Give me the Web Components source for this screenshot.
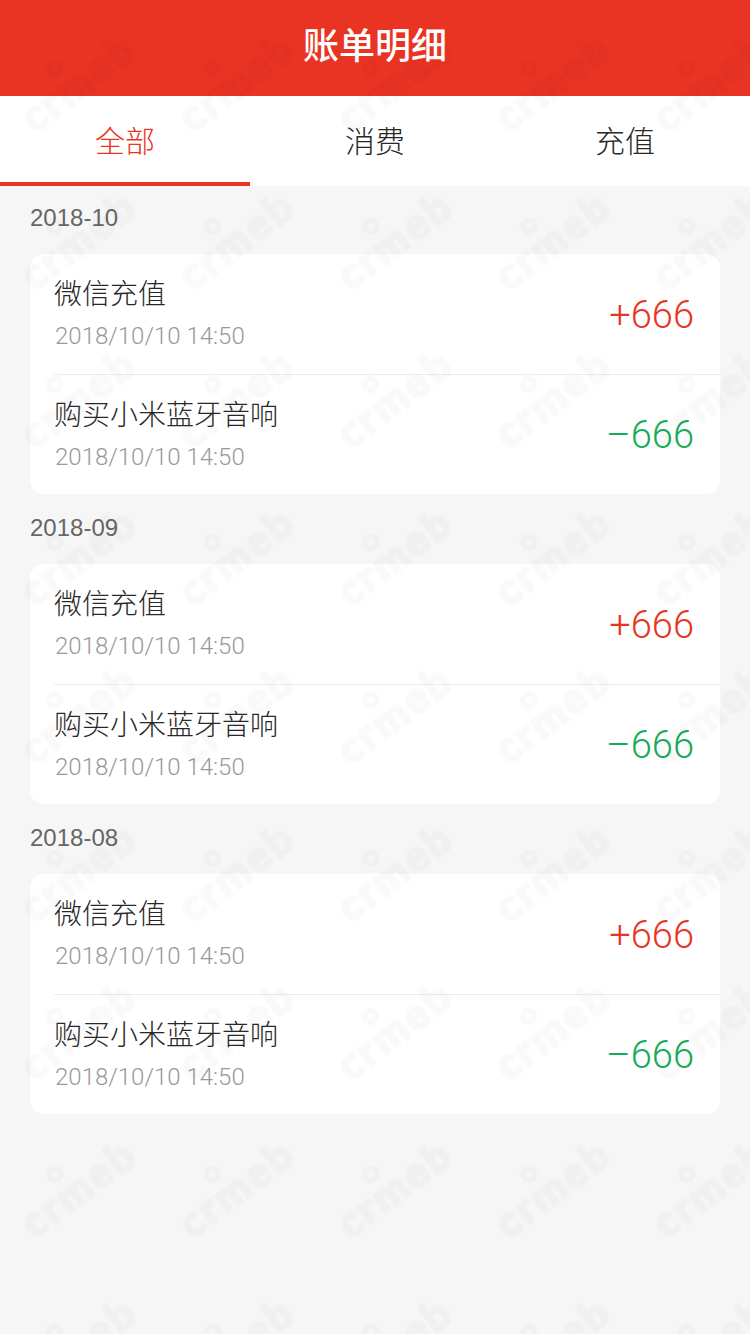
<!DOCTYPE html>
<html lang="zh">
<head>
<meta charset="utf-8">
<title>账单明细</title>
<style>
  html, body { margin: 0; padding: 0; }
  body {
    width: 750px;
    min-height: 1334px;
    background: #f6f6f6;
    font-family: "Liberation Sans", "Noto Sans CJK SC", sans-serif;
  }
</style>
</head>
<body>
<bill-header>账单明细</bill-header>
<bill-tabs>
  <bill-tab active>全部</bill-tab>
  <bill-tab>消费</bill-tab>
  <bill-tab>充值</bill-tab>
</bill-tabs>
<bill-list>
  <bill-month label="2018-10">
    <bill-row title="微信充值" time="2018/10/10 14:50" amount="+666" kind="in"></bill-row>
    <bill-row title="购买小米蓝牙音响" time="2018/10/10 14:50" amount="–666" kind="out"></bill-row>
  </bill-month>
  <bill-month label="2018-09">
    <bill-row title="微信充值" time="2018/10/10 14:50" amount="+666" kind="in"></bill-row>
    <bill-row title="购买小米蓝牙音响" time="2018/10/10 14:50" amount="–666" kind="out"></bill-row>
  </bill-month>
  <bill-month label="2018-08">
    <bill-row title="微信充值" time="2018/10/10 14:50" amount="+666" kind="in"></bill-row>
    <bill-row title="购买小米蓝牙音响" time="2018/10/10 14:50" amount="–666" kind="out"></bill-row>
  </bill-month>
</bill-list>
<bill-watermark></bill-watermark>

<script>
const CJK = `"Noto Sans CJK SC", sans-serif`;
const LATIN = `Roboto, "Noto Sans CJK SC", sans-serif`;

class BillHeader extends HTMLElement {
  constructor() {
    super();
    this.attachShadow({ mode: "open" }).innerHTML = `
      <style>
        :host {
          display: flex;
          box-sizing: border-box;
          height: 96px;
          padding-bottom: 10px;
          align-items: center;
          justify-content: center;
          background: #e93323;
          color: #fff;
          font: 500 36px/1 ${CJK};
        }
      </style>
      <slot></slot>`;
  }
}

class BillTabs extends HTMLElement {
  constructor() {
    super();
    this.attachShadow({ mode: "open" }).innerHTML = `
      <style>
        :host { display: grid; grid-template-columns: repeat(3, 250px); height: 90px; background: #fff; }
      </style>
      <slot></slot>`;
  }
}

class BillTab extends HTMLElement {
  constructor() {
    super();
    this.attachShadow({ mode: "open" }).innerHTML = `
      <style>
        :host {
          display: flex;
          align-items: center;
          justify-content: center;
          box-sizing: border-box;
          padding-bottom: 4px;
          color: #282828;
          font: 300 30px/1 ${CJK};
        }
        :host([active]) {
          color: #e93323;
          border-bottom: 4px solid #e93323;
          padding-bottom: 0;
        }
      </style>
      <slot></slot>`;
  }
}

class BillList extends HTMLElement {
  constructor() {
    super();
    this.attachShadow({ mode: "open" }).innerHTML = `
      <style>
        :host { display: flex; flex-direction: column; gap: 2px; padding: 0 30px; }
      </style>
      <slot></slot>`;
  }
}

class BillMonth extends HTMLElement {
  constructor() {
    super();
    this.attachShadow({ mode: "open" }).innerHTML = `
      <style>
        :host { display: block; }
        .label {
          display: flex;
          align-items: center;
          box-sizing: border-box;
          height: 68px;
          padding-bottom: 4px;
          color: #666;
          font: 24px/1 "Liberation Sans", sans-serif;
        }
        .card { background: #fff; border-radius: 14px; overflow: hidden; }
      </style>
      <div class="label"></div>
      <div class="card"><slot></slot></div>`;
  }
  connectedCallback() {
    this.shadowRoot.querySelector(".label").textContent = this.getAttribute("label");
  }
}

class BillRow extends HTMLElement {
  constructor() {
    super();
    this.attachShadow({ mode: "open" }).innerHTML = `
      <style>
        :host { display: block; height: 119px; margin-left: 24px; box-sizing: border-box; }
        :host(:not(:last-child)) { height: 121px; border-bottom: 1px solid #eee; }
        .row { display: flex; height: 100%; align-items: center; justify-content: space-between; padding-right: 26px; box-sizing: border-box; }
        .info { display: flex; flex-direction: column; gap: 14px; }
        .title { color: #282828; font: 300 28px/30px ${CJK}; }
        .time { margin-left: 1px; color: #999; font: 300 24px/30px ${LATIN}; }
        .amount { padding-top: 2px; font: 300 38px/1 ${LATIN}; }
        :host(:last-child) .amount { padding-top: 0; }
        :host([kind="in"]) .amount { color: #e93323; }
        :host([kind="out"]) .amount { color: #16ac57; }
      </style>
      <div class="row">
        <div class="info">
          <div class="title"></div>
          <div class="time"></div>
        </div>
        <div class="amount"></div>
      </div>`;
  }
  connectedCallback() {
    for (const key of ["title", "time", "amount"]) {
      this.shadowRoot.querySelector("." + key).textContent = this.getAttribute(key);
    }
  }
}

// faint "crmeb" tile that lies over the whole page
class BillWatermark extends HTMLElement {
  constructor() {
    super();
    this.attachShadow({ mode: "open" }).innerHTML = `
      <style>
        :host { position: absolute; inset: 0; height: 1334px; pointer-events: none; }
        svg { display: block; }
      </style>
      <svg width="750" height="1334" aria-hidden="true">
        <defs>
          <pattern id="tile" x="0" y="5" width="158" height="158" patternUnits="userSpaceOnUse">
            <g transform="rotate(-37 79 79)" fill="#000" stroke="#000" opacity=".024">
              <text x="80" y="92" text-anchor="middle" font-family="Lato" font-weight="900" font-size="42" letter-spacing="3" stroke-width="2.5" stroke-linejoin="round">crmeb</text>
              <circle cx="69" cy="52" r="6" fill="none" stroke-width="5"></circle>
            </g>
          </pattern>
          <filter id="soft"><feGaussianBlur stdDeviation="1"></feGaussianBlur></filter>
        </defs>
        <rect width="750" height="1334" fill="url(#tile)" filter="url(#soft)"></rect>
      </svg>`;
  }
}

customElements.define("bill-header", BillHeader);
customElements.define("bill-tabs", BillTabs);
customElements.define("bill-tab", BillTab);
customElements.define("bill-list", BillList);
customElements.define("bill-month", BillMonth);
customElements.define("bill-row", BillRow);
customElements.define("bill-watermark", BillWatermark);
</script>
</body>
</html>
